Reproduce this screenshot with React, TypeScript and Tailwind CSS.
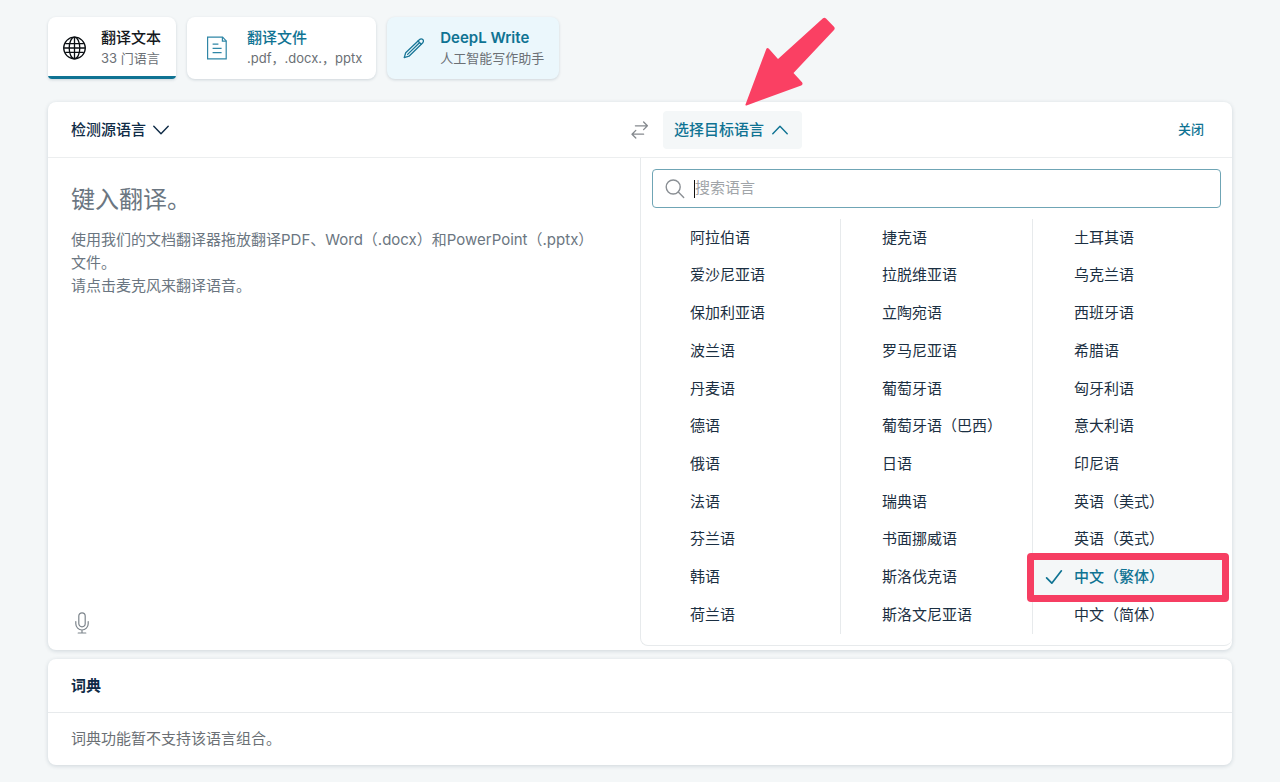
import React, { useState } from "react";

const columns = [
  ["阿拉伯语", "爱沙尼亚语", "保加利亚语", "波兰语", "丹麦语", "德语", "俄语", "法语", "芬兰语", "韩语", "荷兰语"],
  ["捷克语", "拉脱维亚语", "立陶宛语", "罗马尼亚语", "葡萄牙语", "葡萄牙语（巴西）", "日语", "瑞典语", "书面挪威语", "斯洛伐克语", "斯洛文尼亚语"],
  ["土耳其语", "乌克兰语", "西班牙语", "希腊语", "匈牙利语", "意大利语", "印尼语", "英语（美式）", "英语（英式）", "中文（繁体）", "中文（简体）"],
];

const HIGHLIGHTED = "中文（繁体）";

function GlobeIcon() {
  return (
    <svg width="24" height="24" viewBox="0 0 24 24" fill="none" stroke="#0b0f13" strokeWidth="1.3" aria-hidden="true">
      <circle cx="11.5" cy="12" r="10.8" />
      <ellipse cx="11.5" cy="12" rx="5.3" ry="10.8" />
      <path d="M11.5 1.2v21.6M0.7 12h21.6M2.1 7.6h18.8M2.1 16.4h18.8" />
    </svg>
  );
}

function DocumentIcon() {
  return (
    <svg width="24" height="24" viewBox="0 0 24 24" fill="none" stroke="#2f86a6" strokeWidth="1.2" aria-hidden="true">
      <path d="M2.6 1.1h15l3.6 3.8v18H2.6z" />
      <path d="M17.4 1.1v4h4M7.6 8.1h5.8M7.6 12.4h9M7.6 16.6h9" />
    </svg>
  );
}

function PenIcon() {
  return (
    <svg width="24" height="24" viewBox="0 0 24 24" fill="none" stroke="#1a7798" strokeWidth="1.3" strokeLinejoin="round" strokeLinecap="round" aria-hidden="true">
      <path d="M2.2 21.6l1.5-4.8L17.6 3.5a2.2 2.2 0 0 1 3.2 3.2L7 20.2z" />
      <path d="M5.6 18.4L17.2 7M16 5l3.2 3.2" />
    </svg>
  );
}

function Chevron({ up = false }: { up?: boolean }) {
  return (
    <svg width="16" height="10" viewBox="0 0 16 10" fill="none" stroke="currentColor" strokeWidth="1.4" strokeLinecap="round" strokeLinejoin="round" aria-hidden="true">
      <path d={up ? "M0.8 8.8L8 1.2l7.2 7.6" : "M0.8 1.2L8 8.8l7.2-7.6"} />
    </svg>
  );
}

function SwapIcon() {
  return (
    <svg width="18" height="20" viewBox="0 0 18 20" fill="none" stroke="#85898e" strokeWidth="1.3" strokeLinecap="round" strokeLinejoin="round" aria-hidden="true">
      <path d="M4.4 5.8h12M12.6 2l3.8 3.8-3.8 3.8M12.6 14.2H1M4.8 10.4L1 14.2 4.8 18" />
    </svg>
  );
}

function SearchIcon() {
  return (
    <svg width="20" height="20" viewBox="0 0 20 20" fill="none" stroke="#8a8f94" strokeWidth="1.4" strokeLinecap="round" aria-hidden="true">
      <circle cx="8.2" cy="8" r="7" />
      <path d="M13.3 13.1l5.4 5.4" />
    </svg>
  );
}

function MicIcon() {
  return (
    <svg width="14" height="22" viewBox="0 0 14 22" fill="none" stroke="#7d858c" strokeWidth="1.2" strokeLinecap="round" aria-hidden="true">
      <rect x="3.8" y="0.8" width="6.4" height="14" rx="3.2" />
      <path d="M0.8 9.6v2.2a6.2 6.2 0 0 0 12.4 0V9.6M7 18v3M3.2 21h7.6" />
    </svg>
  );
}

function CheckIcon() {
  return (
    <svg width="18" height="16" viewBox="0 0 18 16" fill="none" stroke="#0f7393" strokeWidth="1.7" strokeLinecap="round" strokeLinejoin="round" aria-hidden="true">
      <path d="M1.6 8.8l5.2 5.4L16.4 1.8" />
    </svg>
  );
}

type ModeTabProps = {
  icon: React.ReactNode;
  title: string;
  subtitle: string;
  selected?: boolean;
  className: string;
  titleClass: string;
};

function ModeTab({ icon, title, subtitle, selected, className, titleClass }: ModeTabProps) {
  return (
    <button
      type="button"
      className={`relative flex h-[62px] items-center overflow-hidden rounded-lg pb-px text-left shadow-[0_1px_3px_rgba(15,43,70,0.16)] ${className}`}
    >
      {icon}
      <span className="flex flex-col">
        <span className={`text-[15px] leading-5 ${titleClass}`}>{title}</span>
        <span className="text-[13px] leading-5 text-[#6b7075]">{subtitle}</span>
      </span>
      {selected && <span className="absolute inset-x-0 bottom-0 h-[3px] bg-[#0f7393]" />}
    </button>
  );
}

export default function App() {
  const [query, setQuery] = useState("");

  return (
    <div className="min-h-screen bg-[#f4f7f8] px-12 pt-[17px] pb-4 font-[Inter,'Noto_Sans_CJK_SC',sans-serif] text-[15px] text-[#0f2b46]">
      <nav className="flex gap-[11px]">
        <ModeTab
          icon={<GlobeIcon />}
          title="翻译文本"
          subtitle="33 门语言"
          selected
          className="gap-[14px] rounded-b-sm bg-white px-[15px]"
          titleClass="font-medium text-[#14181c]"
        />
        <ModeTab
          icon={<DocumentIcon />}
          title="翻译文件"
          subtitle=".pdf，.docx.，pptx"
          className="gap-[18px] bg-white pr-[14px] pl-[18px]"
          titleClass="font-medium text-[#0f7393]"
        />
        <ModeTab
          icon={<PenIcon />}
          title="DeepL Write"
          subtitle="人工智能写作助手"
          className="gap-[14px] bg-[#ebf7fc] px-[15px]"
          titleClass="font-semibold text-[#0f7393]"
        />
      </nav>

      <main className="mt-[23px] rounded-lg bg-white shadow-[0_1px_4px_rgba(15,43,70,0.16)]">
        <header className="relative grid grid-cols-[1fr_46px_1fr] items-center border-b border-[#eceeef] pt-[9px] pb-2">
          <div className="pl-[23px]">
            <button type="button" className="flex items-center gap-[7px] font-medium">
              检测源语言
              <Chevron />
            </button>
          </div>
          <button type="button" aria-label="切换语言" className="flex justify-center">
            <SwapIcon />
          </button>
          <div className="flex items-center justify-between pr-7">
            <button type="button" aria-expanded="true" className="flex h-[38px] items-center gap-2 rounded bg-[#f4f7f8] pr-[14px] pl-[11px] font-medium text-[#0f7393]">
              选择目标语言
              <Chevron up />
            </button>
            <button type="button" className="text-[13px] font-medium text-[#0f7393]">
              关闭
            </button>
          </div>

          {/* Pointer arrow over the target language button */}
          <svg className="pointer-events-none absolute bottom-[50px] left-[calc(50%+103px)]" width="94" height="90" viewBox="0 0 94 90" aria-hidden="true">
            <path
              d="M2.5 87.5L23.2 32.2Q24.2 30 25.9 31.8L35 42 80 1.2Q81.5 0 83 1.4L91 9.8Q92.4 11.5 91 13L50.5 56 59 65.2Q60.4 67.3 58.2 68.4L3.5 88.4Q2 88.6 2.5 87.5z"
              fill="#fa4063"
            />
          </svg>
        </header>

        <div className="grid grid-cols-2">
          <section className="flex flex-col justify-between px-[23px] pt-[26px] pb-4 text-[#6b7681]">
            <div>
              <h1 className="text-2xl">键入翻译。</h1>
              <p className="mt-3 max-w-[520px] leading-[23px]">
                使用我们的文档翻译器拖放翻译PDF、Word（.docx）和PowerPoint（.pptx）文件。
                <br />
                请点击麦克风来翻译语音。
              </p>
            </div>
            <button type="button" aria-label="麦克风" className="self-start px-1">
              <MicIcon />
            </button>
          </section>

          <section className="mb-1 rounded-b-lg border-b border-l border-[#e7eaec] py-[11px]">
            <label className="relative mx-[11px] flex h-[39px] items-center gap-[10px] rounded border border-[#6fa5b5] pl-3">
              <SearchIcon />
              <input
                type="text"
                value={query}
                onChange={(e) => setQuery(e.target.value)}
                placeholder="搜索语言"
                aria-label="搜索语言"
                className="min-w-0 flex-1 outline-none placeholder:text-[#a0a4a8]"
              />
              <span className="absolute left-[41px] h-[18px] w-px bg-[#111]" />
            </label>

            <div className="mt-[11px] grid grid-cols-3 pr-2 pl-[7px]">
              {columns.map((languages, i) => (
                <ul key={i} className={`grid h-[415px] auto-rows-fr border-l ${i > 0 ? "border-[#e7eaec]" : "border-transparent"}`}>
                  {languages.map((language) => {
                    const active = language === HIGHLIGHTED;
                    return (
                      <li key={language} className="relative">
                        <button
                          type="button"
                          className={`flex h-full w-full items-center ${active ? "bg-[#f4f7f8] font-medium text-[#0f7393]" : "text-[#1b2f42]"}`}
                        >
                          <span className="flex w-[41px] justify-center">{active && <CheckIcon />}</span>
                          {language}
                        </button>
                        {active && (
                          <span className="pointer-events-none absolute -inset-y-[6px] -right-[5px] -left-[6px] rounded border-[7px] border-[#f63e62]" />
                        )}
                      </li>
                    );
                  })}
                </ul>
              ))}
            </div>
          </section>
        </div>
      </main>

      <section className="mt-[9px] rounded-lg bg-white shadow-[0_1px_4px_rgba(15,43,70,0.16)]">
        <h2 className="border-b border-[#e7eaec] px-[23px] py-[15px] leading-[23px] font-bold">词典</h2>
        <p className="px-[23px] pt-[14px] pb-[15px] leading-[23px] text-[#6b7075]">词典功能暂不支持该语言组合。</p>
      </section>
    </div>
  );
}
